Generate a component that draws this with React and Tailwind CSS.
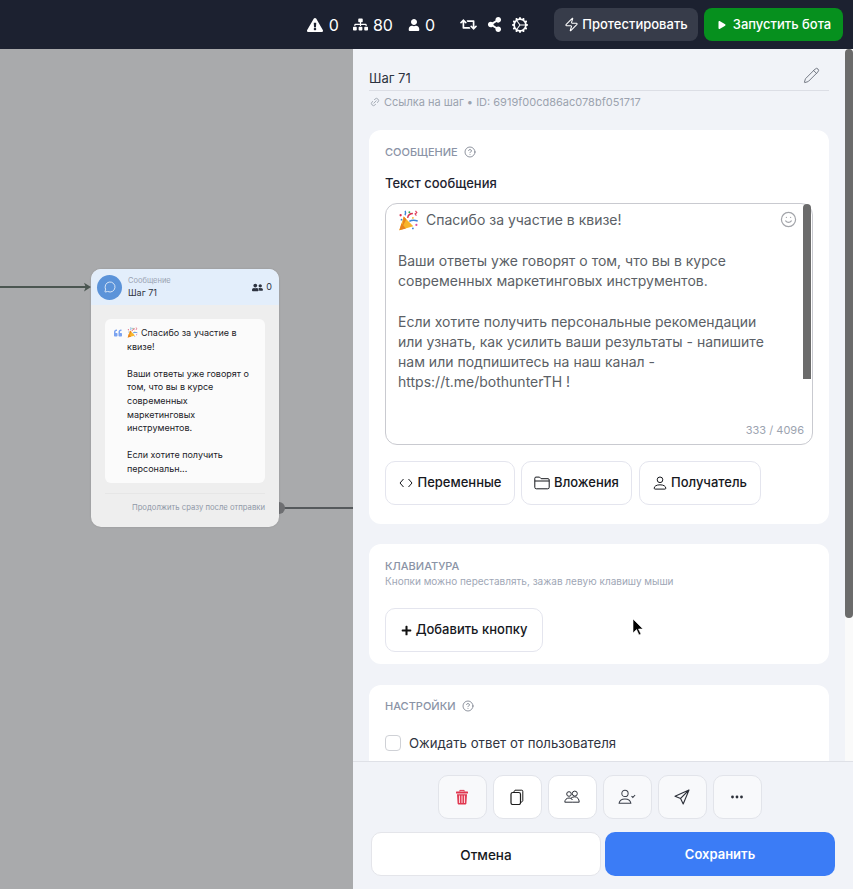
import React from "react";
import {
  FaExclamationTriangle,
  FaSitemap,
  FaUser,
  FaRetweet,
  FaShareAlt,
  FaPlay,
  FaPlus,
  FaQuoteLeft,
  FaUserFriends,
} from "react-icons/fa";
import { BsGearWideConnected } from "react-icons/bs";
import { Zap, Pencil, Link2, CircleHelp, Smile, MessageCircle } from "lucide-react";

const Popper = ({ className }) => (
  <svg viewBox="0 0 24 24" className={className}>
    <path d="M1.500 23l5-15.500 11 11z" fill="#f7b52c" />
    <path d="M1.500 23l2.500-8 5 6.200zM6.500 7.500l3 3-4.500 9z" fill="#e8831f" />
    <path d="M11 9c.5-3 3-5 6-5" stroke="#d9304f" strokeWidth="1.700" fill="none" />
    <path d="M13 13c2.500-1.500 6-1.500 9.500-.5" stroke="#3b82d6" strokeWidth="1.700" fill="none" />
    <path d="M8 6c1-1.500 1-3 .2-5" stroke="#3b82d6" strokeWidth="1.600" fill="none" />
    <path d="M20 1l1.500 2-2 1.500 1.500 2" stroke="#e0405f" strokeWidth="1.300" fill="none" />
    <circle cx="13" cy="2.500" r="1.100" fill="#2fa84f" />
    <circle cx="21" cy="17" r="1.200" fill="#d94fa0" />
    <circle cx="17" cy="21" r="1" fill="#3b82d6" />
    <circle cx="3" cy="6" r="1.300" fill="#d9304f" />
    <circle cx="4" cy="11" r="1" fill="#3b82d6" />
    <circle cx="17" cy="9" r="1" fill="#f7b52c" />
  </svg>
);

const TrashIcon = () => (
  <svg viewBox="0 0 16 16" className="h-[16px] w-[16px]">
    <path d="M5.800 2.600V1.400h4.400v1.200" stroke="#e0364f" strokeWidth="1" fill="none" />
    <rect x="2" y="2.600" width="12" height="1.800" rx="0.500" fill="#e0364f" />
    <path d="M3 5.200h10l-.6 9.400a.8.8 0 0 1-.8.8H4.400a.8.8 0 0 1-.8-.8z" fill="#e0364f" />
    <path d="M5.500 6.500v7.500M8 6.500v7.500M10.500 6.500v7.500" stroke="#fbd5da" strokeWidth="1.100" />
  </svg>
);

const CopyIcon = () => (
  <svg viewBox="0 0 16 16" fill="none" stroke="#1c1c1c" className="h-[16px] w-[16px]">
    <rect x="2" y="3.500" width="9.500" height="12" rx="1.800" strokeWidth="1.200" />
    <path d="M4.500 3.300L6 1.200h6.800a1 1 0 0 1 1 1v9.500a1 1 0 0 1-.6.9l-1.700 1" strokeWidth="1" />
  </svg>
);

const UsersIcon = () => (
  <svg viewBox="0 0 16 16" fill="none" stroke="#2b2f38" strokeWidth="1" className="h-[16px] w-[16px]">
    <circle cx="5" cy="5" r="2.300" />
    <circle cx="10.800" cy="4.600" r="2.500" />
    <path d="M.8 13.200c0-2.500 1.800-4.200 4.200-4.200 1.500 0 2.800.7 3.500 2M.8 13.200h7.400M7 9.200c1-.9 2.400-1.400 3.800-1.400 2.600 0 4.400 2.200 4.400 5.400H8.200" />
  </svg>
);

const UserCheckIcon = () => (
  <svg viewBox="0 0 16 16" fill="none" stroke="#3a3f4a" strokeWidth="0.900" className="h-[18px] w-[18px]">
    <circle cx="6.200" cy="4.800" r="2.800" />
    <path d="M1 13.500c.3-2.400 2.500-3.800 5.200-3.800s4.900 1.400 5.200 3.800zM12 7.200l1.200 1.200 2-2.200" />
  </svg>
);

const PlaneIcon = () => (
  <svg viewBox="0 0 16 16" fill="none" stroke="#2b2f38" strokeWidth="1.100" strokeLinejoin="round" className="h-[16px] w-[16px]">
    <path d="M15 1L1 7.200l5.600 2.200L9.200 15zM15 1L6.600 9.400" />
  </svg>
);

const DotsIcon = () => (
  <svg viewBox="0 0 16 16" fill="#2b2f38" className="h-[16px] w-[16px]">
    <circle cx="3.500" cy="8" r="1.400" />
    <circle cx="8" cy="8" r="1.400" />
    <circle cx="12.500" cy="8" r="1.400" />
  </svg>
);

const CodeIcon = () => (
  <svg viewBox="0 0 14 10" fill="none" stroke="#16181d" strokeWidth="1" className="mr-[1px] h-[10px] w-[14px]">
    <path d="M4.500 1L1 5l3.500 4M9.500 1L13 5 9.500 9" />
  </svg>
);

const FolderIcon = () => (
  <svg viewBox="0 0 16 14" fill="none" stroke="#16181d" strokeWidth="1" className="h-[14px] w-[16px]">
    <path d="M.8 11.300V2.300a1.200 1.200 0 0 1 1.200-1.200h3.500l1.600 1.600h6.900a1.200 1.200 0 0 1 1.200 1.200v7.400a1.500 1.500 0 0 1-1.500 1.500H2.300a1.500 1.500 0 0 1-1.500-1.500zM.8 5h14.400" />
  </svg>
);

const PersonIcon = () => (
  <svg viewBox="0 0 14 14" fill="none" stroke="#16181d" strokeWidth="1" className="h-[14px] w-[14px]">
    <circle cx="7" cy="3.800" r="2.800" />
    <path d="M1.200 12.200c0-2 2.300-3.400 5.800-3.400s5.800 1.400 5.800 3.400a.9.9 0 0 1-.9.9H2.100a.9.9 0 0 1-.9-.9z" />
  </svg>
);

const Stat = ({ icon, value, className }) => (
  <div className={`flex items-center text-[16px] text-white ${className}`}>
    {icon}
    <span>{value}</span>
  </div>
);

const ToolButton = ({ children, tinted }) => (
  <button
    className={`flex h-[44px] w-[49px] items-center justify-center rounded-[10px] border border-[#e2e4ea] ${
      tinted ? "bg-[#f8f9fb]" : "bg-white"
    }`}
  >
    {children}
  </button>
);

const OutlineButton = ({ icon, label, className }) => (
  <button
    className={`flex h-[44px] items-center justify-center gap-[4px] rounded-[10px] border border-[#e4e5ee] bg-white text-[13px] font-medium text-[#16181d] ${className}`}
  >
    {icon}
    {label}
  </button>
);

const Canvas = () => (
  <div className="relative h-full w-[353px] shrink-0 overflow-hidden bg-[#a9aaac]">
    <div className="absolute left-0 top-[237px] h-[2px] w-[88px] bg-[#4b5651]" />
    <svg viewBox="0 0 8 10" className="absolute left-[84px] top-[233px] h-[10px] w-[7px]">
      <path d="M0 0l8 5-8 5 2-5z" fill="#4b5651" />
    </svg>
    <div className="absolute left-[281px] top-[458px] h-[2px] w-[72px] bg-[#55595c]" />
    <div className="absolute left-[273px] top-[453px] h-[12px] w-[12px] rounded-full bg-[#6e6f72]" />
    <div className="absolute left-[91px] top-[220px] w-[188px] overflow-hidden rounded-[10px] bg-[#eeeeee] shadow-[0_0_2px_rgba(0,0,0,0.15)]">
      <div className="flex h-[36px] items-center bg-[#e3eefb] pl-[6px] pr-[7px]">
        <div className="flex h-[25px] w-[25px] items-center justify-center rounded-full bg-[#5b93d9]">
          <MessageCircle size={12} color="#ffffff" strokeWidth={1.500} />
        </div>
        <div className="ml-[6px] flex-1">
          <div className="text-[7.500px] leading-[11px] text-[#9aa3b2]">Сообщение</div>
          <div className="mt-[1px] text-[9px] leading-[12px] text-[#2d3340]">Шаг 71</div>
        </div>
        <div className="flex items-center gap-[3px] text-[9px] text-[#2d3340]">
          <FaUserFriends size={11} color="#2d3340" />
          <span>0</span>
        </div>
      </div>
      <div className="px-[14px] pt-[14px]">
        <div className="flex rounded-[6px] bg-[#fbfbfb] pb-[7px] pl-[9px] pr-[8px] pt-[7px]">
          <FaQuoteLeft size={8} color="#7ba3f0" className="mt-[3px] shrink-0" />
          <div className="ml-[5px] text-[9px] leading-[13.600px] text-[#1c1c28]">
            <div>
              <Popper className="mr-[3px] inline h-[11px] w-[11px] align-[-2px]" />
              Спасибо за участие в квизе!
            </div>
            <div className="mt-[13.600px]">Ваши ответы уже говорят о том, что вы в курсе современных маркетинговых инструментов.</div>
            <div className="mt-[13.600px]">Если хотите получить персональн...</div>
          </div>
        </div>
      </div>
      <div className="mx-[14px] mt-[10px] border-t border-[#e6e6e6] pb-[13px] pt-[8px] text-right text-[7.700px] leading-[12px] text-[#9099a8]">
        Продолжить сразу после отправки
      </div>
    </div>
  </div>
);

const SectionTitle = ({ children, help }) => (
  <div className="flex items-center gap-[6px] text-[11px] font-medium uppercase leading-[14px] text-[#8a93a6]">
    {children}
    {help && <CircleHelp size={12} color="#6b7280" strokeWidth={1.500} />}
  </div>
);

const MessageCard = () => (
  <div className="rounded-[12px] bg-white px-[16px] pb-[19px] pt-[15px]">
    <SectionTitle help>Сообщение</SectionTitle>
    <div className="mt-[15px] text-[13px] font-medium leading-[18px] text-[#1d2330]">Текст сообщения</div>
    <div className="relative mt-[11px] h-[242px] rounded-[12px] border border-[#c9cad0] bg-white pl-[12px] pr-[40px] pt-[6px] text-[14px] leading-[20.200px] text-[#5b5f66]">
      <div className="flex items-center">
        <Popper className="mr-[7px] h-[21px] w-[21px]" />
        Спасибо за участие в квизе!
      </div>
      <div className="mt-[20.200px]">Ваши ответы уже говорят о том, что вы в курсе современных маркетинговых инструментов.</div>
      <div className="mt-[20.200px]">
        Если хотите получить персональные рекомендации или узнать, как усилить ваши результаты - напишите нам или подпишитесь на наш канал - https://t.me/bothunterTH !
      </div>
      <Smile size={17} color="#a3a5aa" className="absolute right-[15px] top-[7px]" strokeWidth={1.700} />
      <div className="absolute right-[1px] top-0 h-[175px] w-[8px] rounded-t-[4px] bg-[#6b6b6b]" />
      <div className="absolute bottom-[6px] right-[8px] text-[11px] leading-[16px] text-[#9ca3af]">333 / 4096</div>
    </div>
    <div className="mt-[16px] flex">
      <OutlineButton className="mr-[6px] w-[130px]" icon={<CodeIcon />} label="Переменные" />
      <OutlineButton className="mr-[7px] w-[111px]" icon={<FolderIcon />} label="Вложения" />
      <OutlineButton className="w-[122px]" icon={<PersonIcon />} label="Получатель" />
    </div>
  </div>
);

const KeyboardCard = () => (
  <div className="mt-[20px] h-[120px] rounded-[12px] bg-white px-[16px] pt-[15px]">
    <SectionTitle>Клавиатура</SectionTitle>
    <div className="mt-[1px] text-[10px] leading-[14px] text-[#a0a7b6]">Кнопки можно переставлять, зажав левую клавишу мыши</div>
    <OutlineButton className="mt-[20px] w-[158px]" icon={<FaPlus size={11} color="#111111" />} label="Добавить кнопку" />
  </div>
);

const SettingsCard = () => (
  <div className="mt-[21px] h-[120px] rounded-[12px] bg-white px-[16px] pt-[14px]">
    <SectionTitle help>Настройки</SectionTitle>
    <label className="mt-[21px] flex items-center gap-[8px] text-[13.200px] leading-[18px] text-[#30343f]">
      <span className="h-[16px] w-[16px] rounded-[4px] border border-[#cfd1d6] bg-white" />
      Ожидать ответ от пользователя
    </label>
  </div>
);

const Panel = () => (
  <div className="relative flex h-full w-[500px] flex-col bg-[#f1f3f8]">
    <div className="relative min-h-0 flex-1 overflow-hidden pl-[16px] pr-[24px] pt-[20px]">
      <div className="flex h-[22px] items-center justify-between border-b border-[#dcdee5] pb-[3px] text-[13px] leading-[18px] text-[#2d3340]">
        Шаг 71
        <Pencil size={17} color="#5f6470" strokeWidth={1.200} className="mb-[5px] mr-[9px]" />
      </div>
      <div className="mt-[4px] flex items-center text-[11px] leading-[14px] text-[#9ca3af]">
        <Link2 size={10} className="ml-[1px] mr-[4px] -rotate-45" />
        Ссылка на шаг • ID: 6919f00cd86ac078bf051717
      </div>
      <div className="mt-[21px]">
        <MessageCard />
        <KeyboardCard />
        <SettingsCard />
      </div>
      <div className="absolute right-0 top-0 h-full w-[8px] bg-[#fafafa]" />
      <div className="absolute right-0 top-0 h-[569px] w-[8px] rounded-[4px] bg-[#6b6b6b]" />
    </div>
    <div className="h-[128px] shrink-0 border-t border-[#dfe1e7] bg-[#f1f3f8] px-[18px] pt-[13px]">
      <div className="flex justify-center gap-[6px] pr-[7px]">
        <ToolButton tinted>
          <TrashIcon />
        </ToolButton>
        <ToolButton>
          <CopyIcon />
        </ToolButton>
        <ToolButton>
          <UsersIcon />
        </ToolButton>
        <ToolButton tinted>
          <UserCheckIcon />
        </ToolButton>
        <ToolButton tinted>
          <PlaneIcon />
        </ToolButton>
        <ToolButton tinted>
          <DotsIcon />
        </ToolButton>
      </div>
      <div className="mt-[13px] flex gap-[4px]">
        <button className="h-[44px] w-[230px] rounded-[10px] border border-[#e4e5ea] bg-white pt-[2px] text-[13.500px] font-medium text-[#16181d]">Отмена</button>
        <button className="h-[44px] w-[230px] rounded-[10px] bg-[#3b7cf6] pt-[2px] text-[13px] font-semibold text-white">Сохранить</button>
      </div>
    </div>
  </div>
);

export default function App() {
  return (
    <div className="flex h-[889px] w-[853px] flex-col overflow-hidden font-['Inter',sans-serif]">
      <div className="flex h-[49px] shrink-0 items-center justify-end bg-[#1c2130] pr-[10px]">
        <Stat className="mr-[14px] gap-[6px]" icon={<FaExclamationTriangle size={16} />} value="0" />
        <Stat className="mr-[15px] gap-[5px]" icon={<FaSitemap size={15} />} value="80" />
        <Stat className="mr-[25px] gap-[5px]" icon={<FaUser size={12} />} value="0" />
        <FaRetweet size={17} color="#ffffff" className="mr-[10px]" />
        <FaShareAlt size={15} color="#ffffff" className="mr-[10px]" />
        <BsGearWideConnected size={16} color="#ffffff" className="mr-[26px]" />
        <button className="mr-[6px] flex h-[33px] w-[144px] items-center justify-center gap-[3px] rounded-[8px] bg-[#373c4a] text-[13px] font-medium text-white">
          <Zap size={15} strokeWidth={1.700} />
          Протестировать
        </button>
        <button className="flex h-[33px] w-[139px] items-center justify-center gap-[7px] rounded-[8px] bg-[#06901e] pl-[2px] text-[13px] font-medium text-white">
          <FaPlay size={8} />
          Запустить бота
        </button>
      </div>
      <div className="flex min-h-0 flex-1">
        <Canvas />
        <Panel />
      </div>
      <svg viewBox="0 0 12 18" className="absolute left-[632px] top-[618px] h-[18px] w-[12px]">
        <path d="M1 1v14l3.500-3.500 2.500 5.500 2-1-2.500-5h4.500z" fill="#000000" stroke="#ffffff" strokeWidth="0.600" />
      </svg>
    </div>
  );
}
